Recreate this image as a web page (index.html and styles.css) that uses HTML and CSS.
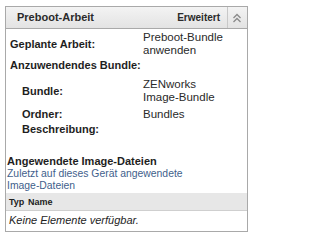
FILE: index.html
```html
<!DOCTYPE html>
<html>
<head>
<meta charset="utf-8">
<link rel="stylesheet" href="styles.css">
</head>
<body>
<div class="panel">
  <div class="head">
    <div class="title">Preboot-Arbeit</div>
    <div class="adv">Erweitert</div>
    <div class="toggle">
      <svg width="10" height="10" viewBox="0 0 10 10"><polyline points="1.5,5 5,1.5 8.5,5" fill="none" stroke="#8a8a8a" stroke-width="1.3"/><polyline points="1.5,9 5,5.5 8.5,9" fill="none" stroke="#8a8a8a" stroke-width="1.3"/></svg>
    </div>
  </div>
  <div class="props">
    <div class="row r1"><div class="lbl">Geplante Arbeit:</div><div class="val">Preboot-Bundle<br>anwenden</div></div>
    <div class="row r2"><div class="lbl">Anzuwendendes Bundle:</div></div>
    <div class="row r3"><div class="lbl sub">Bundle:</div><div class="val">ZENworks<br>Image-Bundle</div></div>
    <div class="row r4"><div class="lbl sub">Ordner:</div><div class="val">Bundles</div></div>
    <div class="row r5"><div class="lbl sub">Beschreibung:</div><div class="val"></div></div>
  </div>
  <div class="images">
    <div class="sec-title">Angewendete Image-Dateien</div>
    <div class="sec-desc">Zuletzt auf dieses Gerät angewendete<br>Image-Dateien</div>
    <div class="thead"><span class="c-typ">Typ</span><span class="c-name">Name</span></div>
    <div class="empty">Keine Elemente verfügbar.</div>
  </div>
</div>
</body>
</html>
```
FILE: styles.css
```css
* { box-sizing: border-box; }
body {
  margin: 0;
  background: #fff;
  font-family: "Liberation Sans", Arial, sans-serif;
  font-size: 11px;
  color: #1e1e1e;
}
.panel {
  margin: 6px 0 0 5px;
  width: 243px;
  height: 226px;
  border: 1px solid #a9a9a9;
}
.head {
  display: flex;
  align-items: center;
  height: 22px;
  border-bottom: 1px solid #a9a9a9;
  background: linear-gradient(#f3f3f3, #e3e3e3);
  color: #2a2a2a;
  font-weight: bold;
}
.title {
  flex: 1;
  padding-left: 11px;
  font-size: 11px;
  line-height: 21px;
}
.adv {
  font-size: 10px;
  padding-right: 7px;
  line-height: 21px;
}
.toggle {
  width: 20px;
  height: 21px;
  border-left: 1px solid #c8c8c8;
  display: flex;
  align-items: center;
  justify-content: center;
  padding-right: 1px;
}
.toggle svg { display: block; }
.props {
  padding-top: 2px;
}
.row {
  display: grid;
  grid-template-columns: 137px 1fr;
  align-items: center;
  line-height: 13px;
}
.r2 { margin-top: 2px; }
.r3 { margin-top: 6px; }
.r4 { margin-top: 4px; }
.r5 { margin-top: 2px; }
.lbl {
  padding-left: 4px;
  font-weight: bold;
  white-space: nowrap;
}
.lbl.sub { padding-left: 16px; }
.val {
  font-size: 11.5px;
  color: #2a2a2a;
}
.images {
  margin-top: 19px;
}
.sec-title {
  padding-left: 1px;
  font-weight: bold;
  line-height: 13px;
}
.sec-desc {
  padding-left: 1px;
  font-size: 10.4px;
  line-height: 12px;
  color: #3f5f8c;
}
.thead {
  margin-top: 1px;
  height: 18px;
  display: flex;
  align-items: center;
  background: #e7e7e7;
  border-bottom: 1px solid #cfcfcf;
  font-size: 9px;
  font-weight: bold;
  color: #222;
  padding-left: 3px;
}
.c-typ { width: 19px; }
.empty {
  padding: 3px 0 0 3px;
  font-style: italic;
  line-height: 13px;
}
```
